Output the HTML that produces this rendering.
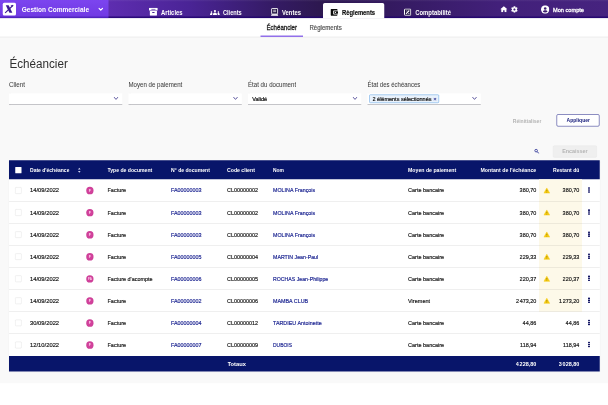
<!DOCTYPE html>
<html lang="fr"><head><meta charset="utf-8"><title>Échéancier</title>
<style>
html,body{margin:0;padding:0;background:#fff;overflow:hidden;}
body{width:608px;height:405px;overflow:hidden;position:relative;font-family:"Liberation Sans",sans-serif;}
#c{position:absolute;left:0;top:0;width:2432px;height:1620px;transform:scale(0.25);transform-origin:0 0;overflow:hidden;}
#c div,#c .a,#c .t{position:absolute;}
#c .t{white-space:nowrap;display:block;will-change:opacity;-webkit-text-stroke:0.7px currentColor;}
</style></head><body><div id="c">
<div style="left:0px;top:0px;width:2432px;height:1533.2px;background:#f9f9f9;"></div>
<div style="left:0px;top:0px;width:2432px;height:73.4px;background:linear-gradient(90deg,#5e2db0 0,#5e2db0 17.8%,#4a2496 31%,#351b66 44.5%,#2d1850 52.5%,#341a60 64%,#42207a 82%,#46237f 100%);"></div>
<div style="left:0px;top:0px;width:2432px;height:73.4px;background:linear-gradient(180deg,rgba(255,255,255,.07) 0,rgba(255,255,255,0) 10%,rgba(30,0,110,0) 87%,rgba(30,0,110,.75) 93%,rgba(30,0,110,.8) 100%);"></div>
<div style="left:0px;top:0px;width:433.6px;height:73.4px;background:linear-gradient(180deg,#7c45ef 0,#713ae4 87%,#5527c6 93%,#4a1fb6 100%);"></div>
<div style="left:11.2px;top:11.2px;width:52.8px;height:50.8px;background:#fff;border-radius:6px;"></div>
<svg class="a" style="left:11.2px;top:11.2px;width:52.8px;height:50.8px" viewBox="0 0 13.2 12.7"><path d="M3 2.400h2.900l1.500 3 2.200 4.700h-2.900l-1.500-3z" fill="#3d1a94"/><path d="M2.400 10.200L10.400 2.500" stroke="#3d1a94" stroke-width="1.100" fill="none"/><path d="M7.900 2.400h2.700l-1.500 1.900z" fill="#3d1a94"/></svg>
<span class="t" style="top:15.84px;height:40.32px;line-height:40.32px;font-size:28.8px;color:#fff;font-weight:700;-webkit-text-stroke-width:0;left:87.2px;transform:scaleX(0.909);transform-origin:0 50%;">Gestion Commerciale</span>
<svg class="a" style="left:392.8px;top:27.2px;width:20px;height:20px" viewBox="0 0 10 10"><path d="M1.500 3.200l3.500 3.500L8.500 3.200" fill="none" stroke="#fff" stroke-width="2.500" stroke-linecap="round" stroke-linejoin="round"/></svg>
<div style="left:1292px;top:12.4px;width:245.2px;height:61.8px;background:#fff;border-radius:6.8px 6.8px 0 0;"></div>
<svg class="a" style="left:596px;top:31.4px;width:35.2px;height:32px" viewBox="0 0 9.3 8.2"><path fill="#fff" d="M.5 0h8.300a.5.500 0 0 1 .5.500V2.800H0V.5A.5.500 0 0 1 .5 0z"/><path fill="#fff" d="M.9 3.200h7.500v4.500a.5.500 0 0 1-.5.500H1.400a.5.500 0 0 1-.5-.5z"/><rect x="2.500" y="1.100" width="4.300" height=".9" fill="#4a2496" opacity=".75"/><rect x="3.400" y="4.300" width="2.500" height="1.100" rx=".3" fill="#4a2496"/></svg>
<span class="t" style="top:31.56px;height:35.28px;line-height:35.28px;font-size:25.2px;color:#fff;font-weight:700;-webkit-text-stroke-width:0;left:644px;transform:scaleX(0.933);transform-origin:0 50%;">Articles</span>
<svg class="a" style="left:839.6px;top:39.6px;width:39.6px;height:20px" viewBox="0 0 9.9 5"><circle cx="4.950" cy="1.100" r="1.100" fill="#fff"/><path d="M2.900 5c0-1.700.9-2.500 2.050-2.500S7 3.300 7 5z" fill="#fff"/><circle cx="1.500" cy="2.100" r=".8" fill="#fff"/><path d="M0 5c0-1.400.6-2 1.500-2 .5 0 .8.100 1 .4-.3.500-.4 1-.4 1.600z" fill="#fff"/><circle cx="8.400" cy="2.100" r=".8" fill="#fff"/><path d="M9.900 5c0-1.400-.6-2-1.500-2-.5 0-.8.100-1 .4.300.5.400 1 .4 1.600z" fill="#fff"/></svg>
<span class="t" style="top:31.56px;height:35.28px;line-height:35.28px;font-size:25.2px;color:#fff;font-weight:700;-webkit-text-stroke-width:0;left:892px;transform:scaleX(0.893);transform-origin:0 50%;">Clients</span>
<svg class="a" style="left:1082.8px;top:31.6px;width:30.8px;height:31.6px" viewBox="0 0 7.7 7.9"><rect x=".9" y=".45" width="6" height="5.600" rx=".5" fill="#1d0f3f" stroke="#fff" stroke-width=".9"/><path d="M2.400 2.200h3M2.400 3.700h3" stroke="#fff" stroke-width=".75"/><path d="M.9 6.200h6l.7 1.700H.1z" fill="#fff"/></svg>
<span class="t" style="top:31.56px;height:35.28px;line-height:35.28px;font-size:25.2px;color:#fff;font-weight:700;-webkit-text-stroke-width:0;left:1128px;transform:scaleX(0.934);transform-origin:0 50%;">Ventes</span>
<svg class="a" style="left:1322px;top:35.6px;width:30px;height:27.6px" viewBox="0 0 7.5 6.9"><path fill="#0b0b0b" d="M.8 0h5.400a.8.800 0 0 1 .8.800v5.300a.8.800 0 0 1-.8.800H.8a.8.800 0 0 1-.8-.8V.8A.8.800 0 0 1 .8 0z"/><rect x="2.700" y="1.500" width="4.800" height="3.900" rx=".6" fill="#fff"/><rect x="3.600" y="2.200" width="3.900" height="2.500" rx=".4" fill="#0b0b0b"/><circle cx="4.900" cy="3.450" r=".6" fill="#fff"/></svg>
<span class="t" style="top:31.56px;height:35.28px;line-height:35.28px;font-size:25.2px;color:#0c0c0c;font-weight:700;-webkit-text-stroke-width:0;left:1368px;transform:scaleX(0.928);transform-origin:0 50%;-webkit-text-stroke-width:.6px;">Règlements</span>
<svg class="a" style="left:1615.6px;top:34px;width:29.2px;height:29.2px" viewBox="0 0 7.3 7.3"><rect x=".5" y=".5" width="6.300" height="6.300" rx=".6" fill="#1d0f3f" stroke="#fff" stroke-width="1"/><path d="M2 5.300L5.300 2" stroke="#fff" stroke-width="1.100"/><path d="M1.900 2.400h1.600M4 5h1.500" stroke="#fff" stroke-width=".55"/></svg>
<span class="t" style="top:31.56px;height:35.28px;line-height:35.28px;font-size:25.2px;color:#fff;font-weight:700;-webkit-text-stroke-width:0;left:1660.8px;transform:scaleX(0.937);transform-origin:0 50%;">Comptabilité</span>
<svg class="a" style="left:1999.6px;top:23.4px;width:30.8px;height:26px" viewBox="0 0 24 22"><path fill="#fff" d="M12 1.500L0 12h3.300v10h6.200v-7h5v7h6.200V12H24z"/></svg>
<svg class="a" style="left:2043.6px;top:23.8px;width:27.6px;height:27.6px" viewBox="2 2 20 20"><path fill="#fff" d="M19.140 12.940c.04-.3.060-.61.060-.940 0-.32-.02-.64-.07-.94l2.030-1.580a.49.490 0 0 0 .12-.61l-1.920-3.320a.488.488 0 0 0-.59-.22l-2.390.96c-.5-.38-1.030-.7-1.620-.94l-.36-2.540a.484.484 0 0 0-.48-.41h-3.840c-.24 0-.43.170-.47.410l-.36 2.540c-.59.240-1.130.57-1.620.94l-2.390-.96c-.22-.08-.47 0-.59.220L2.740 8.870c-.12.210-.08.470.12.610l2.030 1.580c-.05.300-.09.630-.09.940s.02.640.07.940l-2.030 1.580a.49.490 0 0 0-.12.610l1.920 3.320c.12.220.37.290.59.220l2.390-.96c.5.380 1.030.7 1.620.94l.36 2.540c.05.240.24.410.48.410h3.840c.24 0 .44-.17.470-.41l.36-2.540c.59-.24 1.130-.56 1.620-.94l2.390.96c.22.080.47 0 .59-.22l1.920-3.320c.12-.22.070-.47-.12-.61l-2.010-1.580zM12 15c-1.650 0-3-1.350-3-3s1.350-3 3-3 3 1.350 3 3-1.350 3-3 3z"/></svg>
<svg class="a" style="left:2163.6px;top:21.4px;width:33.6px;height:33.6px" viewBox="0 0 24 24"><circle cx="12" cy="12" r="12" fill="#fff"/><circle cx="12" cy="9.200" r="3.700" fill="#3c1e70"/><path d="M5.200 17.800c1.200-2.600 4-3.600 6.800-3.600s5.600 1 6.800 3.600c-1.700 2-4.100 3.100-6.800 3.100s-5.100-1.100-6.800-3.100z" fill="#3c1e70"/></svg>
<span class="t" style="top:22.72px;height:31.36px;line-height:31.36px;font-size:22.4px;color:#fff;left:2211.6px;transform:scaleX(1.005);transform-origin:0 50%;-webkit-text-stroke-width:1.100px;">Mon compte</span>
<div style="left:0px;top:73.4px;width:2432px;height:74.6px;background:#fff;"></div>
<div style="left:0px;top:147.2px;width:2432px;height:2px;background:#dedede;"></div>
<span class="t" style="top:91.8px;height:36.4px;line-height:36.4px;font-size:26px;color:#1c1c1c;left:1066px;transform:scaleX(0.938);transform-origin:0 50%;-webkit-text-stroke-width:1.100px;">Échéancier</span>
<div style="left:1042.4px;top:142.4px;width:169.6px;height:6px;background:#9270ea;"></div>
<span class="t" style="top:91.52px;height:36.96px;line-height:36.96px;font-size:26.4px;color:#505050;left:1237.6px;transform:scaleX(0.917);transform-origin:0 50%;">Règlements</span>
<span class="t" style="top:220.6px;height:67.2px;line-height:67.2px;font-size:48px;color:#303030;left:38px;transform:scaleX(0.971);transform-origin:0 50%;-webkit-text-stroke-width:0;">Échéancier</span>
<span class="t" style="top:319.52px;height:36.96px;line-height:36.96px;font-size:26.4px;color:#424242;left:36px;transform:scaleX(0.945);transform-origin:0 50%;-webkit-text-stroke-width:.2px;">Client</span>
<div style="left:36px;top:373.2px;width:452.8px;height:44.4px;background:#fff;box-sizing:border-box;border-bottom:2.4px solid #8e8e96;box-shadow:0 0 3.2px rgba(0,0,0,.06);"></div>
<svg class="a" style="left:453.6px;top:384.2px;width:20px;height:20px" viewBox="0 0 10 10"><path d="M1.400 2.700L5 6.800 8.600 2.700" fill="none" stroke="#4f4896" stroke-width="1.800" stroke-linecap="round" stroke-linejoin="round"/></svg>
<span class="t" style="top:319.52px;height:36.96px;line-height:36.96px;font-size:26.4px;color:#424242;left:514px;transform:scaleX(0.928);transform-origin:0 50%;-webkit-text-stroke-width:.2px;">Moyen de paiement</span>
<div style="left:514px;top:373.2px;width:452.8px;height:44.4px;background:#fff;box-sizing:border-box;border-bottom:2.4px solid #8e8e96;box-shadow:0 0 3.2px rgba(0,0,0,.06);"></div>
<svg class="a" style="left:931.6px;top:384.2px;width:20px;height:20px" viewBox="0 0 10 10"><path d="M1.400 2.700L5 6.800 8.600 2.700" fill="none" stroke="#4f4896" stroke-width="1.800" stroke-linecap="round" stroke-linejoin="round"/></svg>
<span class="t" style="top:319.52px;height:36.96px;line-height:36.96px;font-size:26.4px;color:#424242;left:992px;transform:scaleX(0.930);transform-origin:0 50%;-webkit-text-stroke-width:.2px;">État du document</span>
<div style="left:992px;top:373.2px;width:452.8px;height:44.4px;background:#fff;box-sizing:border-box;border-bottom:2.4px solid #8e8e96;box-shadow:0 0 3.2px rgba(0,0,0,.06);"></div>
<svg class="a" style="left:1409.6px;top:384.2px;width:20px;height:20px" viewBox="0 0 10 10"><path d="M1.400 2.700L5 6.800 8.600 2.700" fill="none" stroke="#4f4896" stroke-width="1.800" stroke-linecap="round" stroke-linejoin="round"/></svg>
<span class="t" style="top:319.52px;height:36.96px;line-height:36.96px;font-size:26.4px;color:#424242;left:1470px;transform:scaleX(0.911);transform-origin:0 50%;-webkit-text-stroke-width:.2px;">État des échéances</span>
<div style="left:1470px;top:373.2px;width:452.8px;height:44.4px;background:#fff;box-sizing:border-box;border-bottom:2.4px solid #8e8e96;box-shadow:0 0 3.2px rgba(0,0,0,.06);"></div>
<svg class="a" style="left:1887.6px;top:384.2px;width:20px;height:20px" viewBox="0 0 10 10"><path d="M1.400 2.700L5 6.800 8.600 2.700" fill="none" stroke="#4f4896" stroke-width="1.800" stroke-linecap="round" stroke-linejoin="round"/></svg>
<span class="t" style="top:379.52px;height:31.36px;line-height:31.36px;font-size:22.4px;color:#141414;left:1008.8px;transform:scaleX(0.986);transform-origin:0 50%;-webkit-text-stroke-width:.9px;">Validé</span>
<div style="left:1476.8px;top:378.4px;width:279.2px;height:33.2px;background:#e9f2fc;border:2.2px solid #5b9ee0;border-radius:4.4px;box-sizing:border-box;"></div>
<span class="t" style="top:379.24px;height:31.92px;line-height:31.92px;font-size:22.8px;color:#101010;left:1490.4px;transform:scaleX(0.964);transform-origin:0 50%;-webkit-text-stroke-width:.8px;">2 éléments sélectionnés</span>
<span class="t" style="top:379.12px;height:31.36px;line-height:31.36px;font-size:22.4px;color:#2a2f8f;font-weight:700;-webkit-text-stroke-width:0;left:1732.8px;transform:scaleX(1.035);transform-origin:0 50%;">×</span>
<span class="t" style="top:465.76px;height:32.48px;line-height:32.48px;font-size:23.2px;color:#b4b4b4;font-weight:700;-webkit-text-stroke-width:0;left:2051.2px;transform:scaleX(0.871);transform-origin:0 50%;">Réinitialiser</span>
<div style="left:2226.4px;top:456.8px;width:171.6px;height:48.8px;background:#fff;border:2.6px solid #1c1f86;border-radius:6px;box-sizing:border-box;"></div>
<span class="t" style="top:465.64px;height:31.92px;line-height:31.92px;font-size:22.8px;color:#141a7a;font-weight:700;-webkit-text-stroke-width:0;left:2266.4px;transform:scaleX(0.882);transform-origin:0 50%;">Appliquer</span>
<svg class="a" style="left:2135.6px;top:594px;width:21.6px;height:21.6px" viewBox="0 0 24 24"><circle cx="9.500" cy="9.500" r="5.800" fill="none" stroke="#343a9a" stroke-width="3.800"/><path d="M14.500 14.500L21 21" stroke="#343a9a" stroke-width="4.400" stroke-linecap="round"/></svg>
<div style="left:2212px;top:581.6px;width:175.2px;height:48px;background:#efefef;border:1.4px solid #e0e0e0;border-radius:4.8px;box-sizing:border-box;"></div>
<span class="t" style="top:590.48px;height:30.24px;line-height:30.24px;font-size:21.6px;color:#b4b4b4;font-weight:700;-webkit-text-stroke-width:0;left:2212px;width:175.2px;text-align:center;">Encaisser</span>
<div style="left:36.4px;top:641.2px;width:2362.8px;height:846px;background:#fff;box-shadow:0 1.6px 6.4px rgba(0,0,0,.10);"></div>
<div style="left:36.4px;top:641.2px;width:2362.8px;height:76px;background:#08156a;"></div>
<div style="left:36.4px;top:1423.6px;width:2362.8px;height:62.8px;background:#08156a;"></div>
<div style="left:60.8px;top:667.6px;width:25.6px;height:25.6px;background:#fff;border-radius:2.4px;"></div>
<span class="t" style="top:665.52px;height:31.36px;line-height:31.36px;font-size:22.4px;color:#fff;font-weight:700;-webkit-text-stroke-width:0;left:120px;transform:scaleX(0.897);transform-origin:0 50%;">Date d'échéance</span>
<svg class="a" style="left:310.4px;top:669.2px;width:14.4px;height:24px" viewBox="0 0 6 10"><path d="M3 1L5.200 3.800H.8zM3 9L5.200 6.200H.8z" fill="#cfd2ee"/></svg>
<span class="t" style="top:665.52px;height:31.36px;line-height:31.36px;font-size:22.4px;color:#fff;font-weight:700;-webkit-text-stroke-width:0;left:430px;transform:scaleX(0.913);transform-origin:0 50%;">Type de document</span>
<span class="t" style="top:665.52px;height:31.36px;line-height:31.36px;font-size:22.4px;color:#fff;font-weight:700;-webkit-text-stroke-width:0;left:684px;transform:scaleX(0.910);transform-origin:0 50%;">N° de document</span>
<span class="t" style="top:665.52px;height:31.36px;line-height:31.36px;font-size:22.4px;color:#fff;font-weight:700;-webkit-text-stroke-width:0;left:908px;transform:scaleX(0.924);transform-origin:0 50%;">Code client</span>
<span class="t" style="top:665.52px;height:31.36px;line-height:31.36px;font-size:22.4px;color:#fff;font-weight:700;-webkit-text-stroke-width:0;left:1092px;transform:scaleX(0.880);transform-origin:0 50%;">Nom</span>
<span class="t" style="top:665.52px;height:31.36px;line-height:31.36px;font-size:22.4px;color:#fff;font-weight:700;-webkit-text-stroke-width:0;left:1632px;transform:scaleX(0.929);transform-origin:0 50%;">Moyen de paiement</span>
<span class="t" style="top:665.52px;height:31.36px;line-height:31.36px;font-size:22.4px;color:#fff;font-weight:700;-webkit-text-stroke-width:0;left:1922px;transform:scaleX(0.932);transform-origin:0 50%;">Montant de l'échéance</span>
<span class="t" style="top:665.52px;height:31.36px;line-height:31.36px;font-size:22.4px;color:#fff;font-weight:700;-webkit-text-stroke-width:0;left:2212px;transform:scaleX(0.912);transform-origin:0 50%;">Restant dû</span>
<div style="left:2156px;top:717.2px;width:172px;height:529.8px;background:#fdf9e9;"></div>
<div style="left:60.8px;top:748.95px;width:25.6px;height:25.6px;background:#fff;border:1.6px solid #c6c6c6;border-radius:3.2px;box-sizing:border-box;"></div>
<span class="t" style="top:745.23px;height:33.04px;line-height:33.04px;font-size:23.6px;color:#161616;left:120px;transform:scaleX(0.986);transform-origin:0 50%;">14/09/2022</span>
<div style="left:344.8px;top:747.35px;width:29.6px;height:29.6px;background:radial-gradient(circle,#d646a0 0,#cf3f99 60%,#bf3389 100%);border-radius:50%;"></div>
<span class="t" style="top:752.63px;height:19.04px;line-height:19.04px;font-size:13.6px;color:#ffd3ec;font-weight:700;-webkit-text-stroke-width:0;left:344.8px;width:29.6px;text-align:center;">F</span>
<span class="t" style="top:745.23px;height:33.04px;line-height:33.04px;font-size:23.6px;color:#161616;left:430px;transform:scaleX(0.929);transform-origin:0 50%;">Facture</span>
<span class="t" style="top:745.23px;height:33.04px;line-height:33.04px;font-size:23.6px;color:#1a2390;left:684px;transform:scaleX(0.915);transform-origin:0 50%;">FA00000003</span>
<span class="t" style="top:745.23px;height:33.04px;line-height:33.04px;font-size:23.6px;color:#161616;left:908px;transform:scaleX(0.921);transform-origin:0 50%;">CL00000002</span>
<span class="t" style="top:745.23px;height:33.04px;line-height:33.04px;font-size:23.6px;color:#1a2390;left:1092px;transform:scaleX(0.906);transform-origin:0 50%;">MOLINA François</span>
<span class="t" style="top:745.23px;height:33.04px;line-height:33.04px;font-size:23.6px;color:#161616;left:1632px;transform:scaleX(0.934);transform-origin:0 50%;">Carte bancaire</span>
<span class="t" style="top:745.23px;height:33.04px;line-height:33.04px;font-size:23.6px;color:#161616;right:286.8px;text-align:right;transform:scaleX(0.925);transform-origin:100% 50%;word-spacing:-.14em;">380,70</span>
<span class="t" style="top:745.23px;height:33.04px;line-height:33.04px;font-size:23.6px;color:#161616;right:114.8px;text-align:right;transform:scaleX(0.925);transform-origin:100% 50%;word-spacing:-.14em;">380,70</span>
<svg class="a" style="left:2174.4px;top:749.75px;width:26.4px;height:24px" viewBox="0 0 22 20"><path d="M11 1.500L21 19H1z" fill="#f5cb14" stroke="#f5cb14" stroke-width="1.500" stroke-linejoin="round"/><path d="M11 7.500v5.500" stroke="#8a6a00" stroke-width="2"/><circle cx="11" cy="15.800" r="1.200" fill="#8a6a00"/></svg>
<div style="left:2352.2px;top:748.95px;width:8px;height:6.4px;background:#0e1060;border-radius:30%;"></div>
<div style="left:2352.2px;top:756.75px;width:8px;height:6.4px;background:#0e1060;border-radius:30%;"></div>
<div style="left:2352.2px;top:764.55px;width:8px;height:6.4px;background:#0e1060;border-radius:30%;"></div>
<div style="left:36.4px;top:804.3px;width:2362.8px;height:2px;background:rgba(0,0,0,.13);"></div>
<div style="left:60.8px;top:837.25px;width:25.6px;height:25.6px;background:#fff;border:1.6px solid #c6c6c6;border-radius:3.2px;box-sizing:border-box;"></div>
<span class="t" style="top:833.53px;height:33.04px;line-height:33.04px;font-size:23.6px;color:#161616;left:120px;transform:scaleX(0.986);transform-origin:0 50%;">14/09/2022</span>
<div style="left:344.8px;top:835.65px;width:29.6px;height:29.6px;background:radial-gradient(circle,#d646a0 0,#cf3f99 60%,#bf3389 100%);border-radius:50%;"></div>
<span class="t" style="top:840.93px;height:19.04px;line-height:19.04px;font-size:13.6px;color:#ffd3ec;font-weight:700;-webkit-text-stroke-width:0;left:344.8px;width:29.6px;text-align:center;">F</span>
<span class="t" style="top:833.53px;height:33.04px;line-height:33.04px;font-size:23.6px;color:#161616;left:430px;transform:scaleX(0.929);transform-origin:0 50%;">Facture</span>
<span class="t" style="top:833.53px;height:33.04px;line-height:33.04px;font-size:23.6px;color:#1a2390;left:684px;transform:scaleX(0.915);transform-origin:0 50%;">FA00000003</span>
<span class="t" style="top:833.53px;height:33.04px;line-height:33.04px;font-size:23.6px;color:#161616;left:908px;transform:scaleX(0.921);transform-origin:0 50%;">CL00000002</span>
<span class="t" style="top:833.53px;height:33.04px;line-height:33.04px;font-size:23.6px;color:#1a2390;left:1092px;transform:scaleX(0.906);transform-origin:0 50%;">MOLINA François</span>
<span class="t" style="top:833.53px;height:33.04px;line-height:33.04px;font-size:23.6px;color:#161616;left:1632px;transform:scaleX(0.934);transform-origin:0 50%;">Carte bancaire</span>
<span class="t" style="top:833.53px;height:33.04px;line-height:33.04px;font-size:23.6px;color:#161616;right:286.8px;text-align:right;transform:scaleX(0.925);transform-origin:100% 50%;word-spacing:-.14em;">380,70</span>
<span class="t" style="top:833.53px;height:33.04px;line-height:33.04px;font-size:23.6px;color:#161616;right:114.8px;text-align:right;transform:scaleX(0.925);transform-origin:100% 50%;word-spacing:-.14em;">380,70</span>
<svg class="a" style="left:2174.4px;top:838.05px;width:26.4px;height:24px" viewBox="0 0 22 20"><path d="M11 1.500L21 19H1z" fill="#f5cb14" stroke="#f5cb14" stroke-width="1.500" stroke-linejoin="round"/><path d="M11 7.500v5.500" stroke="#8a6a00" stroke-width="2"/><circle cx="11" cy="15.800" r="1.200" fill="#8a6a00"/></svg>
<div style="left:2352.2px;top:837.25px;width:8px;height:6.4px;background:#0e1060;border-radius:30%;"></div>
<div style="left:2352.2px;top:845.05px;width:8px;height:6.4px;background:#0e1060;border-radius:30%;"></div>
<div style="left:2352.2px;top:852.85px;width:8px;height:6.4px;background:#0e1060;border-radius:30%;"></div>
<div style="left:36.4px;top:892.6px;width:2362.8px;height:2px;background:rgba(0,0,0,.13);"></div>
<div style="left:60.8px;top:925.55px;width:25.6px;height:25.6px;background:#fff;border:1.6px solid #c6c6c6;border-radius:3.2px;box-sizing:border-box;"></div>
<span class="t" style="top:921.83px;height:33.04px;line-height:33.04px;font-size:23.6px;color:#161616;left:120px;transform:scaleX(0.986);transform-origin:0 50%;">14/09/2022</span>
<div style="left:344.8px;top:923.95px;width:29.6px;height:29.6px;background:radial-gradient(circle,#d646a0 0,#cf3f99 60%,#bf3389 100%);border-radius:50%;"></div>
<span class="t" style="top:929.23px;height:19.04px;line-height:19.04px;font-size:13.6px;color:#ffd3ec;font-weight:700;-webkit-text-stroke-width:0;left:344.8px;width:29.6px;text-align:center;">F</span>
<span class="t" style="top:921.83px;height:33.04px;line-height:33.04px;font-size:23.6px;color:#161616;left:430px;transform:scaleX(0.929);transform-origin:0 50%;">Facture</span>
<span class="t" style="top:921.83px;height:33.04px;line-height:33.04px;font-size:23.6px;color:#1a2390;left:684px;transform:scaleX(0.915);transform-origin:0 50%;">FA00000003</span>
<span class="t" style="top:921.83px;height:33.04px;line-height:33.04px;font-size:23.6px;color:#161616;left:908px;transform:scaleX(0.921);transform-origin:0 50%;">CL00000002</span>
<span class="t" style="top:921.83px;height:33.04px;line-height:33.04px;font-size:23.6px;color:#1a2390;left:1092px;transform:scaleX(0.906);transform-origin:0 50%;">MOLINA François</span>
<span class="t" style="top:921.83px;height:33.04px;line-height:33.04px;font-size:23.6px;color:#161616;left:1632px;transform:scaleX(0.934);transform-origin:0 50%;">Carte bancaire</span>
<span class="t" style="top:921.83px;height:33.04px;line-height:33.04px;font-size:23.6px;color:#161616;right:286.8px;text-align:right;transform:scaleX(0.925);transform-origin:100% 50%;word-spacing:-.14em;">380,70</span>
<span class="t" style="top:921.83px;height:33.04px;line-height:33.04px;font-size:23.6px;color:#161616;right:114.8px;text-align:right;transform:scaleX(0.925);transform-origin:100% 50%;word-spacing:-.14em;">380,70</span>
<svg class="a" style="left:2174.4px;top:926.35px;width:26.4px;height:24px" viewBox="0 0 22 20"><path d="M11 1.500L21 19H1z" fill="#f5cb14" stroke="#f5cb14" stroke-width="1.500" stroke-linejoin="round"/><path d="M11 7.500v5.500" stroke="#8a6a00" stroke-width="2"/><circle cx="11" cy="15.800" r="1.200" fill="#8a6a00"/></svg>
<div style="left:2352.2px;top:925.55px;width:8px;height:6.4px;background:#0e1060;border-radius:30%;"></div>
<div style="left:2352.2px;top:933.35px;width:8px;height:6.4px;background:#0e1060;border-radius:30%;"></div>
<div style="left:2352.2px;top:941.15px;width:8px;height:6.4px;background:#0e1060;border-radius:30%;"></div>
<div style="left:36.4px;top:980.9px;width:2362.8px;height:2px;background:rgba(0,0,0,.13);"></div>
<div style="left:60.8px;top:1013.85px;width:25.6px;height:25.6px;background:#fff;border:1.6px solid #c6c6c6;border-radius:3.2px;box-sizing:border-box;"></div>
<span class="t" style="top:1010.13px;height:33.04px;line-height:33.04px;font-size:23.6px;color:#161616;left:120px;transform:scaleX(0.986);transform-origin:0 50%;">14/09/2022</span>
<div style="left:344.8px;top:1012.25px;width:29.6px;height:29.6px;background:radial-gradient(circle,#d646a0 0,#cf3f99 60%,#bf3389 100%);border-radius:50%;"></div>
<span class="t" style="top:1017.53px;height:19.04px;line-height:19.04px;font-size:13.6px;color:#ffd3ec;font-weight:700;-webkit-text-stroke-width:0;left:344.8px;width:29.6px;text-align:center;">F</span>
<span class="t" style="top:1010.13px;height:33.04px;line-height:33.04px;font-size:23.6px;color:#161616;left:430px;transform:scaleX(0.929);transform-origin:0 50%;">Facture</span>
<span class="t" style="top:1010.13px;height:33.04px;line-height:33.04px;font-size:23.6px;color:#1a2390;left:684px;transform:scaleX(0.915);transform-origin:0 50%;">FA00000005</span>
<span class="t" style="top:1010.13px;height:33.04px;line-height:33.04px;font-size:23.6px;color:#161616;left:908px;transform:scaleX(0.921);transform-origin:0 50%;">CL00000004</span>
<span class="t" style="top:1010.13px;height:33.04px;line-height:33.04px;font-size:23.6px;color:#1a2390;left:1092px;transform:scaleX(0.891);transform-origin:0 50%;">MARTIN Jean-Paul</span>
<span class="t" style="top:1010.13px;height:33.04px;line-height:33.04px;font-size:23.6px;color:#161616;left:1632px;transform:scaleX(0.934);transform-origin:0 50%;">Carte bancaire</span>
<span class="t" style="top:1010.13px;height:33.04px;line-height:33.04px;font-size:23.6px;color:#161616;right:286.8px;text-align:right;transform:scaleX(0.925);transform-origin:100% 50%;word-spacing:-.14em;">229,33</span>
<span class="t" style="top:1010.13px;height:33.04px;line-height:33.04px;font-size:23.6px;color:#161616;right:114.8px;text-align:right;transform:scaleX(0.925);transform-origin:100% 50%;word-spacing:-.14em;">229,33</span>
<svg class="a" style="left:2174.4px;top:1014.65px;width:26.4px;height:24px" viewBox="0 0 22 20"><path d="M11 1.500L21 19H1z" fill="#f5cb14" stroke="#f5cb14" stroke-width="1.500" stroke-linejoin="round"/><path d="M11 7.500v5.500" stroke="#8a6a00" stroke-width="2"/><circle cx="11" cy="15.800" r="1.200" fill="#8a6a00"/></svg>
<div style="left:2352.2px;top:1013.85px;width:8px;height:6.4px;background:#0e1060;border-radius:30%;"></div>
<div style="left:2352.2px;top:1021.65px;width:8px;height:6.4px;background:#0e1060;border-radius:30%;"></div>
<div style="left:2352.2px;top:1029.45px;width:8px;height:6.4px;background:#0e1060;border-radius:30%;"></div>
<div style="left:36.4px;top:1069.2px;width:2362.8px;height:2px;background:rgba(0,0,0,.13);"></div>
<div style="left:60.8px;top:1102.15px;width:25.6px;height:25.6px;background:#fff;border:1.6px solid #c6c6c6;border-radius:3.2px;box-sizing:border-box;"></div>
<span class="t" style="top:1098.43px;height:33.04px;line-height:33.04px;font-size:23.6px;color:#161616;left:120px;transform:scaleX(0.986);transform-origin:0 50%;">14/09/2022</span>
<div style="left:344.8px;top:1100.55px;width:29.6px;height:29.6px;background:radial-gradient(circle,#d646a0 0,#cf3f99 60%,#bf3389 100%);border-radius:50%;"></div>
<span class="t" style="top:1107.23px;height:16.24px;line-height:16.24px;font-size:11.6px;color:#ffd3ec;font-weight:700;-webkit-text-stroke-width:0;left:344.8px;width:29.6px;text-align:center;">FA</span>
<span class="t" style="top:1098.43px;height:33.04px;line-height:33.04px;font-size:23.6px;color:#161616;left:430px;transform:scaleX(0.928);transform-origin:0 50%;">Facture d'acompte</span>
<span class="t" style="top:1098.43px;height:33.04px;line-height:33.04px;font-size:23.6px;color:#1a2390;left:684px;transform:scaleX(0.915);transform-origin:0 50%;">FA00000006</span>
<span class="t" style="top:1098.43px;height:33.04px;line-height:33.04px;font-size:23.6px;color:#161616;left:908px;transform:scaleX(0.921);transform-origin:0 50%;">CL00000005</span>
<span class="t" style="top:1098.43px;height:33.04px;line-height:33.04px;font-size:23.6px;color:#1a2390;left:1092px;transform:scaleX(0.882);transform-origin:0 50%;">ROCHAS Jean-Philippe</span>
<span class="t" style="top:1098.43px;height:33.04px;line-height:33.04px;font-size:23.6px;color:#161616;left:1632px;transform:scaleX(0.934);transform-origin:0 50%;">Carte bancaire</span>
<span class="t" style="top:1098.43px;height:33.04px;line-height:33.04px;font-size:23.6px;color:#161616;right:286.8px;text-align:right;transform:scaleX(0.925);transform-origin:100% 50%;word-spacing:-.14em;">220,37</span>
<span class="t" style="top:1098.43px;height:33.04px;line-height:33.04px;font-size:23.6px;color:#161616;right:114.8px;text-align:right;transform:scaleX(0.925);transform-origin:100% 50%;word-spacing:-.14em;">220,37</span>
<svg class="a" style="left:2174.4px;top:1102.95px;width:26.4px;height:24px" viewBox="0 0 22 20"><path d="M11 1.500L21 19H1z" fill="#f5cb14" stroke="#f5cb14" stroke-width="1.500" stroke-linejoin="round"/><path d="M11 7.500v5.500" stroke="#8a6a00" stroke-width="2"/><circle cx="11" cy="15.800" r="1.200" fill="#8a6a00"/></svg>
<div style="left:2352.2px;top:1102.15px;width:8px;height:6.4px;background:#0e1060;border-radius:30%;"></div>
<div style="left:2352.2px;top:1109.95px;width:8px;height:6.4px;background:#0e1060;border-radius:30%;"></div>
<div style="left:2352.2px;top:1117.75px;width:8px;height:6.4px;background:#0e1060;border-radius:30%;"></div>
<div style="left:36.4px;top:1157.5px;width:2362.8px;height:2px;background:rgba(0,0,0,.13);"></div>
<div style="left:60.8px;top:1190.45px;width:25.6px;height:25.6px;background:#fff;border:1.6px solid #c6c6c6;border-radius:3.2px;box-sizing:border-box;"></div>
<span class="t" style="top:1186.73px;height:33.04px;line-height:33.04px;font-size:23.6px;color:#161616;left:120px;transform:scaleX(0.986);transform-origin:0 50%;">14/09/2022</span>
<div style="left:344.8px;top:1188.85px;width:29.6px;height:29.6px;background:radial-gradient(circle,#d646a0 0,#cf3f99 60%,#bf3389 100%);border-radius:50%;"></div>
<span class="t" style="top:1194.13px;height:19.04px;line-height:19.04px;font-size:13.6px;color:#ffd3ec;font-weight:700;-webkit-text-stroke-width:0;left:344.8px;width:29.6px;text-align:center;">F</span>
<span class="t" style="top:1186.73px;height:33.04px;line-height:33.04px;font-size:23.6px;color:#161616;left:430px;transform:scaleX(0.929);transform-origin:0 50%;">Facture</span>
<span class="t" style="top:1186.73px;height:33.04px;line-height:33.04px;font-size:23.6px;color:#1a2390;left:684px;transform:scaleX(0.915);transform-origin:0 50%;">FA00000002</span>
<span class="t" style="top:1186.73px;height:33.04px;line-height:33.04px;font-size:23.6px;color:#161616;left:908px;transform:scaleX(0.921);transform-origin:0 50%;">CL00000006</span>
<span class="t" style="top:1186.73px;height:33.04px;line-height:33.04px;font-size:23.6px;color:#1a2390;left:1092px;transform:scaleX(0.909);transform-origin:0 50%;">MAMBA CLUB</span>
<span class="t" style="top:1186.73px;height:33.04px;line-height:33.04px;font-size:23.6px;color:#161616;left:1632px;transform:scaleX(0.940);transform-origin:0 50%;">Virement</span>
<span class="t" style="top:1186.73px;height:33.04px;line-height:33.04px;font-size:23.6px;color:#161616;right:286.8px;text-align:right;transform:scaleX(0.925);transform-origin:100% 50%;word-spacing:-.14em;">2 473,20</span>
<span class="t" style="top:1186.73px;height:33.04px;line-height:33.04px;font-size:23.6px;color:#161616;right:114.8px;text-align:right;transform:scaleX(0.925);transform-origin:100% 50%;word-spacing:-.14em;">1 273,20</span>
<svg class="a" style="left:2174.4px;top:1191.25px;width:26.4px;height:24px" viewBox="0 0 22 20"><path d="M11 1.500L21 19H1z" fill="#f5cb14" stroke="#f5cb14" stroke-width="1.500" stroke-linejoin="round"/><path d="M11 7.500v5.500" stroke="#8a6a00" stroke-width="2"/><circle cx="11" cy="15.800" r="1.200" fill="#8a6a00"/></svg>
<div style="left:2352.2px;top:1190.45px;width:8px;height:6.4px;background:#0e1060;border-radius:30%;"></div>
<div style="left:2352.2px;top:1198.25px;width:8px;height:6.4px;background:#0e1060;border-radius:30%;"></div>
<div style="left:2352.2px;top:1206.05px;width:8px;height:6.4px;background:#0e1060;border-radius:30%;"></div>
<div style="left:36.4px;top:1245.8px;width:2362.8px;height:2px;background:rgba(0,0,0,.13);"></div>
<div style="left:60.8px;top:1278.75px;width:25.6px;height:25.6px;background:#fff;border:1.6px solid #c6c6c6;border-radius:3.2px;box-sizing:border-box;"></div>
<span class="t" style="top:1275.03px;height:33.04px;line-height:33.04px;font-size:23.6px;color:#161616;left:120px;transform:scaleX(0.986);transform-origin:0 50%;">30/09/2022</span>
<div style="left:344.8px;top:1277.15px;width:29.6px;height:29.6px;background:radial-gradient(circle,#d646a0 0,#cf3f99 60%,#bf3389 100%);border-radius:50%;"></div>
<span class="t" style="top:1282.43px;height:19.04px;line-height:19.04px;font-size:13.6px;color:#ffd3ec;font-weight:700;-webkit-text-stroke-width:0;left:344.8px;width:29.6px;text-align:center;">F</span>
<span class="t" style="top:1275.03px;height:33.04px;line-height:33.04px;font-size:23.6px;color:#161616;left:430px;transform:scaleX(0.929);transform-origin:0 50%;">Facture</span>
<span class="t" style="top:1275.03px;height:33.04px;line-height:33.04px;font-size:23.6px;color:#1a2390;left:684px;transform:scaleX(0.915);transform-origin:0 50%;">FA00000004</span>
<span class="t" style="top:1275.03px;height:33.04px;line-height:33.04px;font-size:23.6px;color:#161616;left:908px;transform:scaleX(0.921);transform-origin:0 50%;">CL00000012</span>
<span class="t" style="top:1275.03px;height:33.04px;line-height:33.04px;font-size:23.6px;color:#1a2390;left:1092px;transform:scaleX(0.913);transform-origin:0 50%;">TARDIEU Antoinette</span>
<span class="t" style="top:1275.03px;height:33.04px;line-height:33.04px;font-size:23.6px;color:#161616;left:1632px;transform:scaleX(0.934);transform-origin:0 50%;">Carte bancaire</span>
<span class="t" style="top:1275.03px;height:33.04px;line-height:33.04px;font-size:23.6px;color:#161616;right:286.8px;text-align:right;transform:scaleX(0.925);transform-origin:100% 50%;word-spacing:-.14em;">44,86</span>
<span class="t" style="top:1275.03px;height:33.04px;line-height:33.04px;font-size:23.6px;color:#161616;right:114.8px;text-align:right;transform:scaleX(0.925);transform-origin:100% 50%;word-spacing:-.14em;">44,86</span>
<div style="left:2352.2px;top:1278.75px;width:8px;height:6.4px;background:#0e1060;border-radius:30%;"></div>
<div style="left:2352.2px;top:1286.55px;width:8px;height:6.4px;background:#0e1060;border-radius:30%;"></div>
<div style="left:2352.2px;top:1294.35px;width:8px;height:6.4px;background:#0e1060;border-radius:30%;"></div>
<div style="left:36.4px;top:1334.1px;width:2362.8px;height:2px;background:rgba(0,0,0,.13);"></div>
<div style="left:60.8px;top:1367.05px;width:25.6px;height:25.6px;background:#fff;border:1.6px solid #c6c6c6;border-radius:3.2px;box-sizing:border-box;"></div>
<span class="t" style="top:1363.33px;height:33.04px;line-height:33.04px;font-size:23.6px;color:#161616;left:120px;transform:scaleX(0.986);transform-origin:0 50%;">12/10/2022</span>
<div style="left:344.8px;top:1365.45px;width:29.6px;height:29.6px;background:radial-gradient(circle,#d646a0 0,#cf3f99 60%,#bf3389 100%);border-radius:50%;"></div>
<span class="t" style="top:1370.73px;height:19.04px;line-height:19.04px;font-size:13.6px;color:#ffd3ec;font-weight:700;-webkit-text-stroke-width:0;left:344.8px;width:29.6px;text-align:center;">F</span>
<span class="t" style="top:1363.33px;height:33.04px;line-height:33.04px;font-size:23.6px;color:#161616;left:430px;transform:scaleX(0.929);transform-origin:0 50%;">Facture</span>
<span class="t" style="top:1363.33px;height:33.04px;line-height:33.04px;font-size:23.6px;color:#1a2390;left:684px;transform:scaleX(0.915);transform-origin:0 50%;">FA00000007</span>
<span class="t" style="top:1363.33px;height:33.04px;line-height:33.04px;font-size:23.6px;color:#161616;left:908px;transform:scaleX(0.921);transform-origin:0 50%;">CL00000009</span>
<span class="t" style="top:1363.33px;height:33.04px;line-height:33.04px;font-size:23.6px;color:#1a2390;left:1092px;transform:scaleX(0.843);transform-origin:0 50%;">DUBOIS</span>
<span class="t" style="top:1363.33px;height:33.04px;line-height:33.04px;font-size:23.6px;color:#161616;left:1632px;transform:scaleX(0.934);transform-origin:0 50%;">Carte bancaire</span>
<span class="t" style="top:1363.33px;height:33.04px;line-height:33.04px;font-size:23.6px;color:#161616;right:286.8px;text-align:right;transform:scaleX(0.925);transform-origin:100% 50%;word-spacing:-.14em;">118,94</span>
<span class="t" style="top:1363.33px;height:33.04px;line-height:33.04px;font-size:23.6px;color:#161616;right:114.8px;text-align:right;transform:scaleX(0.925);transform-origin:100% 50%;word-spacing:-.14em;">118,94</span>
<div style="left:2352.2px;top:1367.05px;width:8px;height:6.4px;background:#0e1060;border-radius:30%;"></div>
<div style="left:2352.2px;top:1374.85px;width:8px;height:6.4px;background:#0e1060;border-radius:30%;"></div>
<div style="left:2352.2px;top:1382.65px;width:8px;height:6.4px;background:#0e1060;border-radius:30%;"></div>
<span class="t" style="top:1439.92px;height:31.36px;line-height:31.36px;font-size:22.4px;color:#fff;font-weight:700;-webkit-text-stroke-width:0;left:910px;transform:scaleX(1.027);transform-origin:0 50%;">Totaux</span>
<span class="t" style="top:1439.08px;height:33.04px;line-height:33.04px;font-size:23.6px;color:#fff;font-weight:700;-webkit-text-stroke-width:0;right:286.8px;text-align:right;transform:scaleX(0.930);transform-origin:100% 50%;word-spacing:-.14em;">4 228,80</span>
<span class="t" style="top:1439.08px;height:33.04px;line-height:33.04px;font-size:23.6px;color:#fff;font-weight:700;-webkit-text-stroke-width:0;right:114.8px;text-align:right;transform:scaleX(0.930);transform-origin:100% 50%;word-spacing:-.14em;">3 028,80</span>
</div></body></html>
